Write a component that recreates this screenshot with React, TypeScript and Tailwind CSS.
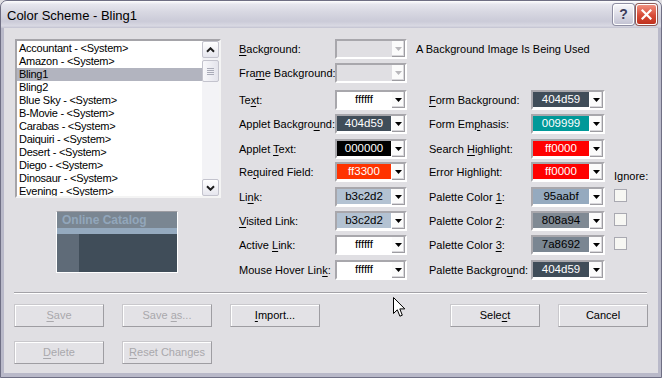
import React from "react";

type Lbl = [string, string, string];

function Label({ l }: { l: Lbl }) {
  return (
    <span className="whitespace-nowrap">
      {l[0]}
      {l[1] ? <span className="underline underline-offset-[2px]">{l[1]}</span> : null}
      {l[2]}
    </span>
  );
}

function DropBtn({ disabled }: { disabled?: boolean }) {
  return (
    <div className="ml-[1px] flex w-[13px] shrink-0 items-center justify-center border-r border-b border-[#9d9ca1] bg-[#fbfbfb] shadow-[inset_-1px_-1px_0_#d8d7db]">
      <svg width="7" height="4" viewBox="0 0 7 4">
        <path d="M0 0h7L3.5 4z" fill={disabled ? "#b9b8bc" : "#000"} />
      </svg>
    </div>
  );
}

function Combo({
  w,
  value,
  color,
  disabled,
}: {
  w: string;
  value?: string;
  color?: string;
  disabled?: boolean;
}) {
  return (
    <div
      className={`flex h-[20px] shrink-0 border-2 border-[#a8a7ac] border-r-white border-b-white ${w} ${
        disabled ? "bg-[#e0dfe3]" : "bg-white"
      }`}
    >
      <div className="flex flex-1 pb-[1px]">
        {disabled ? (
          <div className="flex-1" />
        ) : (
          <div className={`flex flex-1 items-center justify-center text-[11.5px] leading-none ${color}`}>{value}</div>
        )}
      </div>
      <DropBtn disabled={disabled} />
    </div>
  );
}

function Check() {
  return <div className="mt-[2px] ml-[9px] h-[13px] w-[13px] self-start border border-[#a9a9b1] bg-[#f7f7f3]" />;
}

function Btn({ children, disabled }: { children: React.ReactNode; disabled?: boolean }) {
  return (
    <div
      className={`flex h-[23px] w-[90px] shrink-0 items-center justify-center border border-[#9e9da2] border-t-[#c9c8cc] border-l-[#c9c8cc] bg-[#e3e2e6] shadow-[inset_1px_1px_0_#ffffff] ${
        disabled ? "text-[#a9a8ac]" : "text-black"
      }`}
    >
      <span className="whitespace-pre">{children}</span>
    </div>
  );
}

const items = [
  "Accountant - <System>",
  "Amazon - <System>",
  "Bling1",
  "Bling2",
  "Blue Sky - <System>",
  "B-Movie - <System>",
  "Carabas - <System>",
  "Daiquiri - <System>",
  "Desert - <System>",
  "Diego - <System>",
  "Dinosaur - <System>",
  "Evening - <System>",
];

type Row = {
  mt: string;
  l1: Lbl;
  c1: { value?: string; color?: string; disabled?: boolean };
  l2?: Lbl;
  c2?: { value: string; color: string };
  extra?: "text" | "ignore" | "check";
};

const W = "bg-white text-black";
const D = "bg-[#404d59] text-white";

const rows: Row[] = [
  { mt: "mt-0", l1: ["", "B", "ackground:"], c1: { disabled: true }, extra: "text" },
  { mt: "mt-[4px]", l1: ["Fra", "m", "e Background:"], c1: { disabled: true } },
  {
    mt: "mt-[7px]",
    l1: ["Te", "x", "t:"],
    c1: { value: "ffffff", color: W },
    l2: ["", "F", "orm Background:"],
    c2: { value: "404d59", color: D },
  },
  {
    mt: "mt-[4px]",
    l1: ["Applet Backgro", "u", "nd:"],
    c1: { value: "404d59", color: D },
    l2: ["Form Em", "p", "hasis:"],
    c2: { value: "009999", color: "bg-[#009999] text-white" },
  },
  {
    mt: "mt-[5px]",
    l1: ["Applet ", "T", "ext:"],
    c1: { value: "000000", color: "bg-black text-white" },
    l2: ["Search ", "H", "ighlight:"],
    c2: { value: "ff0000", color: "bg-[#ff0000] text-white" },
  },
  {
    mt: "mt-[3px]",
    l1: ["Re", "q", "uired Field:"],
    c1: { value: "ff3300", color: "bg-[#ff3300] text-white" },
    l2: ["Error Highlight:", "", ""],
    c2: { value: "ff0000", color: "bg-[#ff0000] text-white" },
    extra: "ignore",
  },
  {
    mt: "mt-[5px]",
    l1: ["Li", "n", "k:"],
    c1: { value: "b3c2d2", color: "bg-[#b3c2d2] text-black" },
    l2: ["Palette Color ", "1", ":"],
    c2: { value: "95aabf", color: "bg-[#95aabf] text-black" },
    extra: "check",
  },
  {
    mt: "mt-[4px]",
    l1: ["", "V", "isited Link:"],
    c1: { value: "b3c2d2", color: "bg-[#b3c2d2] text-black" },
    l2: ["Palette Color ", "2", ":"],
    c2: { value: "808a94", color: "bg-[#808a94] text-black" },
    extra: "check",
  },
  {
    mt: "mt-[4px]",
    l1: ["Active ", "L", "ink:"],
    c1: { value: "ffffff", color: W },
    l2: ["Palette Color ", "3", ":"],
    c2: { value: "7a8692", color: "bg-[#7a8692] text-black" },
    extra: "check",
  },
  {
    mt: "mt-[5px]",
    l1: ["Mouse Hover Lin", "k", ":"],
    c1: { value: "ffffff", color: W },
    l2: ["Palette Backgro", "u", "nd:"],
    c2: { value: "404d59", color: D },
  },
];

function ScrollBtn({ down }: { down?: boolean }) {
  return (
    <div className="flex h-[17px] w-[17px] shrink-0 items-center justify-center rounded-[2px] border border-[#c3c3cd] bg-[linear-gradient(to_bottom,#ffffff,#e6e6ee)]">
      <svg width="9" height="6" viewBox="0 0 9 6">
        <path
          d={down ? "M1 1.2L4.5 4.7L8 1.2" : "M1 4.8L4.5 1.3L8 4.8"}
          stroke="#1e1e1e"
          strokeWidth="2"
          fill="none"
        />
      </svg>
    </div>
  );
}

export default function App() {
  return (
    <div className="relative h-[378px] w-[662px] bg-[#e0dfe3] font-['Liberation_Sans',Arial,sans-serif] text-[11px] text-black">
      <div className="flex h-full w-full flex-col overflow-hidden rounded-t-[7px] border border-[#6f6f84] bg-[#b9b9c9]">
        {/* Title bar */}
        <div className="flex h-[27px] shrink-0 items-center justify-between bg-[linear-gradient(to_bottom,#ffffff_0%,#e6e6ee_12%,#d8d8e2_40%,#cbcbd8_75%,#d9d9e3_92%,#c2c2d0_100%)] pr-[4px] pl-[6px]">
          <span className="pt-[3px] font-['Liberation_Sans_Narrow','Liberation_Sans',Arial,sans-serif] text-[13px] text-black">
            Color Scheme - Bling1
          </span>
          <div className="flex gap-[2px]">
            <div className="flex h-[21px] w-[21px] items-center justify-center rounded-[3px] border border-white bg-[linear-gradient(to_bottom,#f6f6fa,#c4c4d4)] shadow-[0_0_0_1px_#8e8ea2] text-[14px] font-bold text-[#3d3d5a]">
              ?
            </div>
            <div className="flex h-[21px] w-[21px] items-center justify-center rounded-[3px] border border-white bg-[linear-gradient(to_bottom,#f0907f,#d64a36_55%,#c0321f)] shadow-[0_0_0_1px_#8e5a55]">
              <svg width="11" height="11" viewBox="0 0 11 11">
                <path d="M1.5 1.5L9.5 9.5M9.5 1.5L1.5 9.5" stroke="#fff" strokeWidth="2.2" strokeLinecap="square" />
              </svg>
            </div>
          </div>
        </div>

        {/* Client */}
        <div className="mx-[3px] mb-[4px] flex flex-1 flex-col bg-[#e0dfe3] pt-[11px] pl-[10px]">
          <div className="flex h-[253px] shrink-0">
            {/* left column */}
            <div className="ml-[1px] flex w-[206px] shrink-0 flex-col">
              <div className="flex h-[159px] border-2 border-[#a5a4a9] border-r-[#f4f4f4] border-b-[#f4f4f4] bg-white">
                <div className="flex-1 overflow-hidden pt-[1px] tracking-[-0.25px]">
                  {items.map((t, i) => (
                    <div
                      key={t}
                      className={
                        i === 2
                          ? "h-[13px] bg-[#b2b4bf] pl-[2px] leading-[13px] whitespace-nowrap"
                          : "h-[13px] pl-[2px] leading-[13px] whitespace-nowrap"
                      }
                    >
                      {t}
                    </div>
                  ))}
                </div>
                <div className="flex w-[17px] shrink-0 flex-col bg-[#f3f3f6]">
                  <ScrollBtn />
                  <div className="mt-[2px] flex h-[22px] flex-col items-center justify-center gap-[1px] rounded-[2px] border border-[#c3c3cd] bg-[linear-gradient(to_right,#f8f8fb,#e4e4ec)]">
                    <div className="h-[1px] w-[7px] bg-[#a9abb8]" />
                    <div className="h-[1px] w-[7px] bg-[#a9abb8]" />
                    <div className="h-[1px] w-[7px] bg-[#a9abb8]" />
                    <div className="h-[1px] w-[7px] bg-[#a9abb8]" />
                  </div>
                  <div className="flex-1" />
                  <ScrollBtn down />
                </div>
              </div>
              <div className="mt-[13px] ml-[41px] flex h-[62px] w-[122px] flex-col border border-white border-t-[#9c9ca2] bg-[#404d59]">
                <div className="h-[16px] bg-[#7a8692] pl-[5px] text-[12px] leading-[16px] font-bold text-[#92a6bb]">
                  Online Catalog
                </div>
                <div className="h-[6px] bg-[#95aabf]" />
                <div className="flex flex-1">
                  <div className="w-[22px] bg-[#5f6b78]" />
                  <div className="flex-1 bg-[#404d59]" />
                </div>
              </div>
            </div>

            {/* fields */}
            <div className="ml-[18px] flex flex-col">
              {rows.map((r, i) => (
                <div key={i} className={`flex h-[20px] items-center ${r.mt}`}>
                  <div className="w-[96px] shrink-0">
                    <Label l={r.l1} />
                  </div>
                  <Combo w="w-[72px]" {...r.c1} />
                  {r.extra === "text" ? (
                    <span className="ml-[9px] whitespace-nowrap">A Background Image Is Being Used</span>
                  ) : null}
                  {r.l2 ? (
                    <>
                      <div className="ml-[22px] w-[102px] shrink-0">
                        <Label l={r.l2} />
                      </div>
                      <Combo w="w-[74px]" value={r.c2!.value} color={r.c2!.color} />
                    </>
                  ) : null}
                  {r.extra === "ignore" ? (
                    <span className="ml-[9px] self-end leading-[12px]">Ignore:</span>
                  ) : null}
                  {r.extra === "check" ? <Check /> : null}
                </div>
              ))}
            </div>
          </div>

          {/* separator */}
          <div className="h-[2px] w-[633px] border-t border-b border-t-[#a3a2a7] border-b-white" />

          <div className="mt-[10px] flex gap-[18px]">
            <Btn disabled>
              <span className="underline underline-offset-[2px]">S</span>ave
            </Btn>
            <Btn disabled>
              {"Save "}
              <span className="underline underline-offset-[2px]">a</span>s...
            </Btn>
            <Btn>
              <span className="underline underline-offset-[2px]">I</span>mport...
            </Btn>
            <div className="ml-[112px] flex gap-[18px]">
              <Btn>
                Sele<span className="underline underline-offset-[2px]">c</span>t
              </Btn>
              <Btn>Cancel</Btn>
            </div>
          </div>
          <div className="mt-[14px] flex gap-[18px]">
            <Btn disabled>
              <span className="underline underline-offset-[2px]">D</span>elete
            </Btn>
            <Btn disabled>
              <span className="underline underline-offset-[2px]">R</span>eset Changes
            </Btn>
          </div>
        </div>
      </div>

      {/* mouse cursor */}
      <svg className="absolute top-[297px] left-[393px]" width="13" height="21" viewBox="0 0 13 21">
        <path
          d="M0.5 0.5L0.5 16.5L4.3 12.8L6.9 19.2L9.3 18.2L6.8 11.9L11.8 11.9Z"
          fill="#fff"
          stroke="#000"
          strokeWidth="1"
          strokeLinejoin="miter"
        />
      </svg>
    </div>
  );
}
